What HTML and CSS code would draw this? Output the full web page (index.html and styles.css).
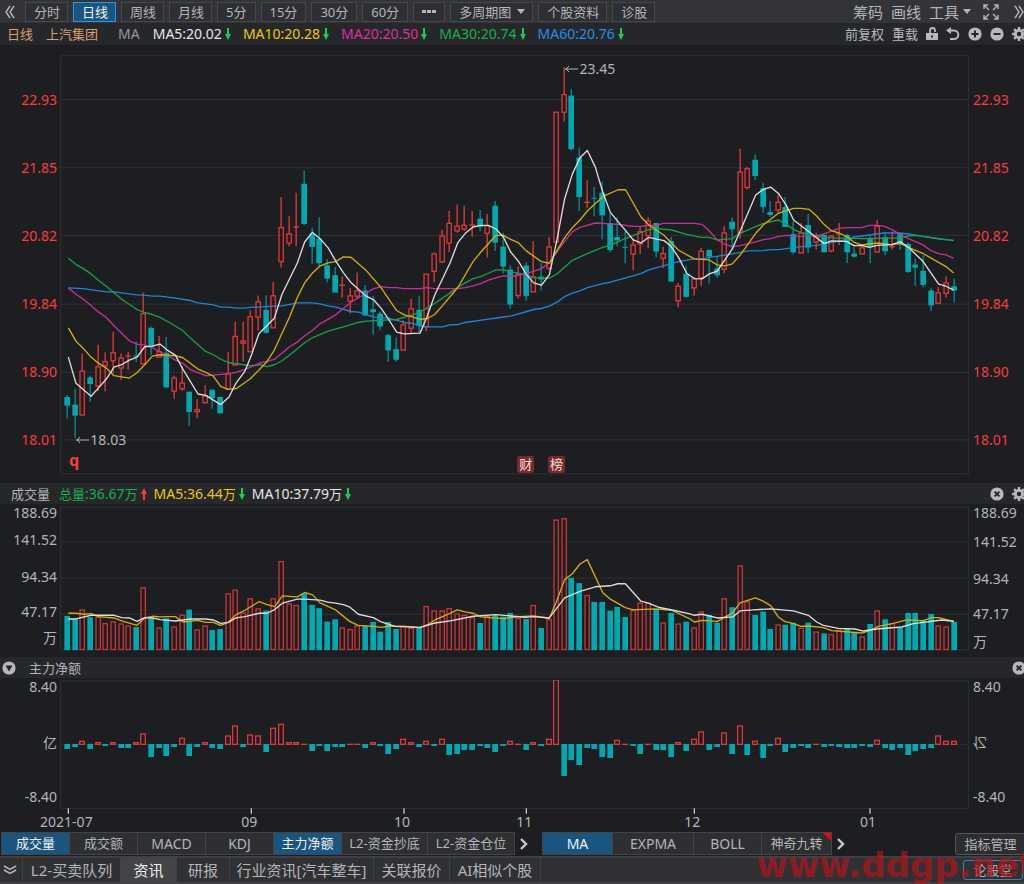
FILE: index.html
```html
<!DOCTYPE html>
<html lang="zh-CN">
<head>
<meta charset="utf-8">
<meta name="viewport" content="width=device-width, initial-scale=1">
<title>上汽集团 日线</title>
<link rel="stylesheet" href="styles.css">
</head>
<body>
<svg class="defs" aria-hidden="true">
  <symbol id="down" viewBox="0 0 6 12"><path d="M2 0h2v6h2L3 12 0 6h2z"/></symbol>
  <symbol id="up" viewBox="0 0 6 12"><path d="M2 12h2V6h2L3 0 0 6h2z"/></symbol>
  <symbol id="caret" viewBox="0 0 8 5"><path d="M0 0h8L4 5z"/></symbol>
  <symbol id="chev" viewBox="0 0 9 12"><path d="M2 1l5 5-5 5" fill="none" stroke="currentColor" stroke-width="2.4"/></symbol>
  <symbol id="close" viewBox="0 0 14 14"><circle cx="7" cy="7" r="6.6"/><path d="M4.6 4.6l4.8 4.8M9.4 4.6L4.6 9.4" stroke="#26272b" stroke-width="2"/></symbol>
  <symbol id="gear" viewBox="0 0 14 14"><circle cx="7" cy="7" r="3.6" fill="none" stroke="currentColor" stroke-width="2.8"/><path d="M7 0v3M7 11v3M0 7h3M11 7h3M2.1 2.1l2 2M9.9 9.9l2 2M11.9 2.1l-2 2M4.1 9.9l-2 2" stroke="currentColor" stroke-width="2.4"/></symbol>
</svg>
<div class="app">
  <header class="toolbar">
    <button class="icon-btn first" aria-label="收起"><svg class="dbl" viewBox="0 0 10 14"><path d="M5 1L1 7l4 6M9 1L5 7l4 6"/></svg></button>
    <nav class="periods">
      <button class="period">分时</button>
      <button class="period active">日线</button>
      <button class="period">周线</button>
      <button class="period">月线</button>
      <button class="period num">5分</button>
      <button class="period num">15分</button>
      <button class="period num">30分</button>
      <button class="period num">60分</button>
      <button class="period num" aria-label="更多"><svg class="dots" viewBox="0 0 14 3"><path d="M0 0h4v3H0zM5 0h4v3H5zM10 0h4v3h-4z"/></svg></button>
      <button class="period">多周期图<svg class="caret"><use href="#caret"/></svg></button>
      <button class="period">个股资料</button>
      <button class="period">诊股</button>
    </nav>
    <div class="tools">
      <button class="tool">筹码</button>
      <button class="tool">画线</button>
      <button class="tool">工具<svg class="caret"><use href="#caret"/></svg></button>
      <button class="tool expand" aria-label="全屏"><svg viewBox="0 0 16 16"><path d="M1 5V1h4M1 1l5 5M11 1h4v4M15 1l-5 5M1 11v4h4M1 15l5-5M15 11v4h-4M15 15l-5-5"/></svg></button>
      <button class="tool last" aria-label="展开"><svg class="dbl" viewBox="0 0 10 14"><path d="M1 1l4 6-4 6M5 1l4 6-4 6"/></svg></button>
    </div>
  </header>

  <div class="info">
    <span class="cjk tan">日线</span><span class="cjk tan name">上汽集团</span><span class="ma-title">MA</span>
    <div class="values">
      <span class="white">MA5:20.02<svg class="arrow green"><use href="#down"/></svg></span>
      <span class="yellow">MA10:20.28<svg class="arrow green"><use href="#down"/></svg></span>
      <span class="magenta">MA20:20.50<svg class="arrow green"><use href="#down"/></svg></span>
      <span class="dgreen">MA30:20.74<svg class="arrow green"><use href="#down"/></svg></span>
      <span class="blue">MA60:20.76<svg class="arrow green"><use href="#down"/></svg></span>
    </div>
    <div class="actions">
      <button class="action">前复权</button>
      <button class="action">重载</button>
      <button class="action ic lock" aria-label="锁定"><svg viewBox="0 0 12 14"><path d="M4 6V3.500a2.500 2.500 0 0 1 5 0V5" fill="none" stroke="currentColor" stroke-width="1.800"/><path fill-rule="evenodd" d="M0 6h12v7H0zM5 8.500v2h2v-2z"/></svg></button>
      <button class="action ic" aria-label="撤销"><svg viewBox="0 0 14 14"><path d="M3 3.500h5a4.300 4.300 0 0 1 0 8.600H4" fill="none" stroke="currentColor" stroke-width="2"/><path d="M0 3.500L5 0v7z"/></svg></button>
      <button class="action ic" aria-label="放大"><svg viewBox="0 0 14 14"><circle cx="7" cy="7" r="6.600"/><path d="M7 3.500v7M3.500 7h7" stroke="#26272b" stroke-width="2"/></svg></button>
      <button class="action ic" aria-label="缩小"><svg viewBox="0 0 14 14"><circle cx="7" cy="7" r="6.600"/><path d="M3.500 7h7" stroke="#26272b" stroke-width="2"/></svg></button>
      <button class="action ic" aria-label="设置"><svg><use href="#gear"/></svg></button>
    </div>
  </div>

  <section class="panel price">
    <div class="axis left"><span>22.93</span><span>21.85</span><span>20.82</span><span>19.84</span><span>18.90</span><span>18.01</span></div>
    <div class="plot">
      <svg class="chart" id="price" viewBox="180 15 2727 1263" preserveAspectRatio="none"></svg>
      <span class="note high"><svg viewBox="0 0 13 8"><path d="M0 4h13M4 1L1 4l3 3"/></svg>23.45</span>
      <span class="note low"><svg viewBox="0 0 13 8"><path d="M0 4h13M4 1L1 4l3 3"/></svg>18.03</span>
      <b class="event-q">q</b>
      <span class="event cai">财</span><span class="event bang">榜</span>
    </div>
    <div class="axis right"><span>22.93</span><span>21.85</span><span>20.82</span><span>19.84</span><span>18.90</span><span>18.01</span></div>
  </section>

  <div class="head">
    <span class="cjk">成交量</span>
    <span class="dgreen total"><i>总量</i>:36.67<i>万</i><svg class="arrow red"><use href="#up"/></svg></span>
    <span class="yellow">MA5:36.44<i>万</i><svg class="arrow green"><use href="#down"/></svg></span>
    <span class="white">MA10:37.79<i>万</i><svg class="arrow green"><use href="#down"/></svg></span>
    <div class="actions">
      <button class="action ic" aria-label="关闭"><svg><use href="#close"/></svg></button>
      <button class="action ic" aria-label="设置"><svg><use href="#gear"/></svg></button>
    </div>
  </div>
  <section class="panel volume">
    <div class="axis left"><span>188.69</span><span>141.52</span><span>94.34</span><span>47.17</span><span>万</span></div>
    <div class="plot"><svg class="chart" id="volume" viewBox="180 81 2727 435" preserveAspectRatio="none"></svg></div>
    <div class="axis right"><span>188.69</span><span>141.52</span><span>94.34</span><span>47.17</span><span>万</span></div>
  </section>

  <div class="head flow-head">
    <button class="action ic" aria-label="选择指标"><svg viewBox="0 0 14 14"><circle cx="7" cy="7" r="6.600"/><path d="M3.500 4.500h7L7 10.500z" fill="#26272b"/></svg></button>
    <span class="cjk">主力净额</span>
    <div class="actions"><button class="action ic" aria-label="关闭"><svg><use href="#close"/></svg></button></div>
  </div>
  <section class="panel flow">
    <div class="axis left"><span>8.40</span><span>亿</span><span>-8.40</span></div>
    <div class="plot"><svg class="chart" id="flow" viewBox="180 60 2727 405" preserveAspectRatio="none"></svg></div>
    <div class="axis right"><span>8.40</span><span class="flip">亿</span><span>-8.40</span></div>
  </section>
  <div class="dates" id="dates"></div>

  <nav class="indicators">
    <div class="group">
      <button class="ind on">成交量</button><button class="ind">成交额</button><button class="ind latin">MACD</button><button class="ind latin">KDJ</button><button class="ind on">主力净额</button><button class="ind wide">L2-资金抄底</button><button class="ind wide">L2-资金仓位</button>
    </div>
    <button class="more" aria-label="更多指标"><svg><use href="#chev"/></svg></button>
    <div class="group second">
      <button class="ind on latin">MA</button><button class="ind latin mid">EXPMA</button><button class="ind latin">BOLL</button><button class="ind hot">神奇九转</button>
    </div>
    <button class="more" aria-label="更多主图指标"><svg><use href="#chev"/></svg></button>
    <button class="manage">指标管理</button>
  </nav>

  <footer class="bottom">
    <button class="fold" aria-label="折叠"><svg viewBox="0 0 14 10"><path d="M1 1l6 3.500L13 1M1 5l6 3.500L13 5"/></svg></button>
    <button class="tab l2">L2-买卖队列</button><button class="tab news current">资讯</button><button class="tab report">研报</button><button class="tab trade">行业资讯[汽车整车]</button><button class="tab quote">关联报价</button><button class="tab ai">AI相似个股</button>
    <button class="forum">论股堂</button>
  </footer>
  <div class="watermark" aria-hidden="true">www.ddgp.net</div>
</div>
<script src="charts.js"></script>
</body>
</html>
```

FILE: styles.css
```css
* { box-sizing: border-box; }
body {
  margin: 0;
  background: #1d1e22;
  color: #b4b5b8;
  font: 14px/20px "Noto Sans", "Noto Sans CJK SC", sans-serif;
}
button {
  margin: 0;
  padding: 0;
  border: 0;
  background: none;
  color: inherit;
  font: inherit;
  white-space: nowrap;
}
svg { display: block; fill: currentColor; }
.defs { position: absolute; width: 0; height: 0; }
.app {
  position: relative;
  display: flex;
  flex-direction: column;
  min-height: 100vh;
  overflow: hidden;
}

/* Top toolbar */
.toolbar {
  display: flex;
  align-items: center;
  height: 23px;
  background: #333438;
  font-size: 13px;
}
.icon-btn.first { width: 25px; padding-left: 5px; }
.dbl { width: 10px; height: 14px; fill: none; stroke: #b4b5b8; stroke-width: 1.4; }
.periods { display: flex; gap: 5px; }
.period {
  display: flex;
  align-items: center;
  justify-content: center;
  height: 20px;
  padding: 0 7px 0 8px;
  border: 1px solid #46474b;
  background: #2e2f33;
  line-height: 18px;
}
.period.num { padding: 0 8px; }
.period.active { background: #1a5580; border-color: #2a98ea; color: #f0f2f4; }
.dots { width: 14px; height: 3px; }
.caret { width: 8px; height: 5px; margin-left: 6px; }
.tools { display: flex; align-items: center; margin-left: auto; gap: 8px; font-size: 15px; }
.tool { display: flex; align-items: center; line-height: 22px; }
.tool .caret { margin-left: 4px; }
.expand { margin-left: 4px; }
.expand svg { width: 16px; height: 16px; fill: none; stroke: currentColor; stroke-width: 1.4; }
.last { margin-left: 7px; }

/* Indicator summary */
.info {
  display: flex;
  align-items: center;
  height: 23px;
  padding-left: 7px;
  background: #26272b;
  border-bottom: 1px solid #1b1b20;
}
.cjk, .head i { font-size: 13px; font-style: normal; }
.tan { color: #d8a070; }
.name { margin-left: 13px; }
.ma-title { margin: 0 13px 0 20px; color: #97989c; }
.values { display: flex; gap: 12px; }
.values span, .head span { display: flex; align-items: center; white-space: nowrap; }
.white { color: #e6e6e6; }
.yellow { color: #f0c800; }
.magenta { color: #de2f9e; }
.dgreen { color: #17b04e; }
.blue { color: #1e90f0; }
.arrow { width: 6px; height: 12px; margin-left: 3px; }
.green { color: #14cf50; }
.red { color: #ff3b38; }
.actions { display: flex; align-items: center; margin-left: auto; gap: 8px; margin-right: -2px; }
.action { font-size: 13px; color: #b8b9bc; }
.ic svg { width: 14px; height: 14px; }
.lock svg { width: 12px; }

/* Chart panels */
.panel { display: flex; }
.price { flex: 438 1 0; padding: 9px 0 8px; }
.volume { flex: 152 1 0; padding: 2px 0 5px; }
.flow { flex: 137 1 0; padding-top: 2px; }
.plot { position: relative; flex: 1; min-width: 0; }
.chart { position: absolute; inset: 0; width: 100%; height: 100%; }
.axis { flex: none; }
.axis span { white-space: nowrap; }
.left { width: 60px; padding-right: 3px; text-align: right; }
.right { width: 55px; padding-left: 4px; }
.price .axis {
  display: flex;
  flex-direction: column;
  justify-content: space-between;
  padding-top: 35px;
  padding-bottom: 25px;
  color: #ff3a38;
}
.volume .axis, .flow .axis { display: grid; align-items: center; line-height: 14px; }
.volume .left { grid-template-rows: 14fr 40fr 32fr 38fr 14fr 7fr; }
.volume .right { grid-template-rows: 14fr 44fr 28fr 42fr 14fr 3fr; }
.flow .axis { grid-template-rows: 14fr 98fr 10fr 13fr; line-height: 10px; }
.flip { transform: scaleY(-1); }
.head {
  display: flex;
  align-items: center;
  height: 21px;
  padding-left: 11px;
  gap: 7px;
  background: #26272b;
}
.head .total { margin-left: 2px; }
.flow-head { padding-left: 2px; gap: 13px; }
.note { position: absolute; display: flex; align-items: center; gap: 1px; }
.note svg { width: 13px; height: 8px; fill: none; stroke: currentColor; stroke-width: 1; }
.high { left: 55.6%; top: 1%; }
.low { left: 1.8%; top: 89.2%; }
.event-q { position: absolute; left: 1%; top: 94%; color: #ff3a38; font-size: 16px; }
.event {
  position: absolute;
  top: 95.5%;
  width: 17px;
  height: 17px;
  border-radius: 3px;
  background: #7f2829;
  color: #f0e4e4;
  font-size: 13px;
  line-height: 17px;
  text-align: center;
}
.cai { left: 50.3%; }
.bang { left: 53.7%; }
.dates { position: relative; height: 16px; margin: 0 55px 0 60px; line-height: 14px; }
.dates span { position: absolute; margin-left: -2px; transform: translateX(-50%); white-space: nowrap; }

/* Chart drawing */
.grid { stroke: #303135; stroke-width: 3; fill: none; }
.r { stroke: #dc3837; stroke-width: 4; fill: #1d1e22; }
.r.vol { stroke: #c93434; }
.wr { stroke: #e23a38; stroke-width: 4; }
.c { fill: #00a8b0; }
.wc { stroke: #078b91; stroke-width: 4; }
.line { fill: none; stroke-width: 4; stroke-linejoin: round; }
.s-white { stroke: #dcdcdc; }
.s-yellow { stroke: #d4ae06; }
.s-magenta { stroke: #c92f98; }
.s-green { stroke: #18a048; }
.s-blue { stroke: #1c86dc; }
.tick { stroke: #c4c4c8; stroke-width: 4; }

/* Indicator tabs */
.indicators { display: flex; align-items: center; height: 25px; padding-left: 1px; font-size: 13px; }
.group { display: flex; border: 1px solid #434448; height: 23px; }
.ind { position: relative; width: 68px; border-right: 1px solid #434448; background: #2e2f33; line-height: 21px; }
.ind:last-child { border-right: 0; }
.ind.on { background: #1a5580; color: #f0f2f4; }
.latin { font-size: 14px; }
.wide { width: 86px; }
.second { margin-left: 14px; }
.second .on { width: 70px; }
.second .mid { width: 81px; }
.second .hot { width: 69px; }
.hot::after {
  content: "";
  position: absolute;
  top: 0;
  right: 0;
  border-top: 8px solid #ff0000;
  border-left: 8px solid transparent;
}
.more { margin-left: 4px; color: #c8c9cc; }
.more svg { width: 9px; height: 12px; }
.manage {
  width: 71px;
  height: 22px;
  margin-left: auto;
  margin-right: -2px;
  border: 1px solid #55565a;
  border-radius: 3px;
  background: #2c2d31;
}

/* Bottom tabs */
.bottom {
  display: flex;
  align-items: center;
  height: 28px;
  background: #303135;
  border-top: 2px solid #404145;
  border-bottom: 2px solid #404145;
  font-size: 15px;
}
.fold { width: 22px; padding-left: 3px; }
.fold svg { width: 14px; height: 10px; fill: none; stroke: currentColor; stroke-width: 1.5; }
.tab { height: 24px; border-left: 1px solid #404145; line-height: 24px; }
.l2 { width: 98px; }
.news { width: 56px; }
.report { width: 53px; }
.trade { width: 144px; }
.quote { width: 76px; }
.ai { width: 92px; border-right: 1px solid #404145; }
.current { background: #434448; color: #f0f0f0; }
.forum {
  width: 60px;
  height: 20px;
  margin-left: auto;
  margin-right: 1px;
  border: 1px solid #2888d0;
  border-radius: 3px;
  font-size: 13px;
  line-height: 18px;
}
.watermark {
  position: absolute;
  right: -11px;
  bottom: 2px;
  color: rgba(190, 18, 24, 0.66);
  font: bold 34px/34px "DejaVu Sans", sans-serif;
  white-space: nowrap;
  pointer-events: none;
}
```

FILE: charts.js
```js
// Chart space uses three units per CSS pixel at the default window width.
const FIRST = 201, STEP = 22.93;
const barX = i => Math.round((FIRST + i * STEP) / 3) * 3;

// direction, high, body top, body bottom, low
const candles = `c 1037 1043 1068 1107|c 1018 1066 1098 1166|r 912 965 1097 1097|c 978 984 1003 1058|r 886 952 1010 1026|r 909 937 949 1026|r 847 910 934 970|r 912 926 956 993|r 907 919 919 962|c 877 919 919 938|r 729 793 943 945|c 831 835 892 917|r 860 907 923 925|c 863 910 1013 1017|r 979 986 1025 1048|r 950 1001 1018 1025|c 1027 1027 1087 1130|r 1050 1081 1087 1107|r 1008 1040 1060 1063|c 1020 1021 1046 1078|c 1043 1043 1091 1092|r 907 973 1020 1020|r 817 861 947 947|r 817 875 881 937|r 782 802 907 907|r 738 757 803 843|c 738 781 849 852|r 697 739 835 835|r 442 534 636 654|r 500 553 580 590|r 429 531 534 590|c 363 402 522 526|c 534 552 591 643|c 503 567 640 651|c 628 647 686 698|c 652 677 728 728|r 680 706 706 745|r 716 739 755 792|r 669 724 740 747|c 706 723 797 800|c 739 779 787 857|c 787 792 830 842|c 853 857 902 938|c 864 899 930 938|r 812 826 902 902|r 748 778 836 851|c 739 781 828 851|r 674 674 832 845|r 608 613 665 698|r 540 559 637 640|r 483 521 580 607|r 464 530 544 549|r 468 527 538 544|r 484 525 528 561|c 481 507 531 545|r 493 529 551 624|c 454 468 578 604|c 549 591 650 672|c 648 660 764 777|r 651 673 738 747|c 638 648 738 754|r 575 682 727 727|c 641 681 689 722|r 562 592 656 661|r 187 187 577 577|r 52 134 187 215|c 117 137 297 302|c 293 324 441 483|r 391 457 459 476|c 411 445 445 500|c 396 429 496 569|c 491 520 600 608|c 503 562 571 590|c 543 592 594 641|r 568 586 613 662|r 529 546 583 613|r 503 514 558 594|c 520 520 605 623|r 591 612 626 656|c 561 574 695 695|r 700 710 754 774|c 648 673 741 745|r 683 688 715 738|r 595 605 685 709|c 600 601 620 702|c 620 657 676 685|r 530 550 659 671|c 503 516 538 600|r 297 367 550 567|r 352 357 413 420|c 313 330 378 391|c 399 415 470 489|c 454 487 495 501|r 434 458 481 489|c 442 472 531 532|c 515 553 607 614|r 520 550 610 610|c 493 526 593 610|r 549 559 577 600|c 556 556 607 608|r 556 559 604 608|r 520 552 556 587|c 552 556 607 640|c 585 612 620 624|r 585 595 613 614|c 559 567 591 640|r 510 530 607 608|c 546 562 604 617|r 546 590 593 600|c 550 550 585 601|c 578 583 666 670|c 627 645 653 709|c 617 664 705 713|c 716 723 767 785|r 713 730 761 764|r 680 700 731 745|c 687 710 722 759`
  .split("|").map(s => { const [d, ...v] = s.split(" "); return [d, ...v.map(Number)]; });

const volumes = [409,419,391,413,413,432,427,433,439,442,325,414,445,416,442,407,390,451,439,451,448,343,332,400,358,388,393,358,247,373,378,342,376,386,426,419,445,450,439,439,427,456,427,448,440,446,444,381,394,394,387,403,407,414,430,411,407,411,400,417,418,378,445,420,123,119,295,311,348,367,367,393,382,412,393,371,371,388,430,400,433,426,445,397,406,429,358,383,260,367,406,396,448,436,435,430,446,429,457,461,465,452,448,457,472,433,394,419,432,445,400,400,424,403,439,442,427];

const flows = [-15,-9,10,-15,6,-6,6,-12,-12,6,32,-39,-12,-36,-9,19,-36,-9,6,-12,-15,26,56,-9,29,26,-25,49,61,6,6,3,-22,-6,-22,-9,-9,3,3,-12,6,-6,-29,-15,16,6,-9,10,-6,16,-32,-29,-18,-18,-6,-12,-25,-6,10,3,-18,6,-6,16,194,-95,-48,-62,-12,-15,-39,-42,13,3,-6,-29,3,-18,-18,-39,6,-22,16,38,-18,-9,35,-29,56,-32,10,-42,-6,19,-25,-12,-6,-12,3,-9,-6,-9,-12,-12,-6,-9,13,-12,-18,-12,-32,-22,-15,-12,26,10,10];

const priceLines = {
  blue: "205,715 250,717 319,727 342,727 411,736 434,737 457,740 480,740 526,746 571,753 594,760 640,766 662,773 687,773 708,776 735,776 755,773 777,773 823,770 846,769 892,760 937,760 960,763 984,769 1007,773 1053,786 1075,788 1120,802 1166,806 1213,819 1237,822 1260,830 1282,832 1327,832 1350,826 1374,825 1396,819 1465,809 1500,804 1535,799 1601,780 1624,777 1648,770 1671,758 1694,741 1717,731 1740,724 1762,714 1808,702 1831,698 1923,672 1946,661 1992,648 2036,636 2083,628 2106,627 2197,613 2244,604 2290,603 2312,600 2336,600 2404,591 2450,587 2539,570 2562,562 2608,556 2650,550 2701,550 2725,553 2768,560 2816,568 2861,572",
  green: "205,626 228,645 250,657 273,673 296,693 319,710 365,749 411,780 434,789 457,795 480,804 503,816 549,844 571,866 617,906 640,916 662,929 687,940 708,943 755,949 780,946 800,952 823,946 846,934 869,917 914,880 937,865 984,845 1030,832 1075,819 1097,815 1190,810 1237,796 1260,788 1304,762 1350,730 1374,713 1396,700 1419,687 1442,681 1465,671 1488,661 1510,661 1532,666 1578,676 1601,684 1648,686 1671,673 1717,632 1762,612 1808,593 1831,587 1877,566 1923,549 1946,540 1970,537 2015,541 2060,554 2103,563 2128,563 2151,571 2197,567 2220,551 2267,531 2290,521 2336,511 2359,524 2381,540 2404,549 2450,559 2472,564 2539,566 2585,567 2690,565 2725,559 2750,557 2791,563 2861,573",
  magenta: "205,715 228,734 250,749 273,768 296,788 319,804 342,829 388,874 411,884 434,887 457,895 480,907 503,919 526,932 549,942 571,960 594,970 617,979 640,977 662,975 687,973 708,969 735,960 750,954 777,942 823,930 869,892 892,878 914,859 937,843 960,823 1007,796 1053,758 1097,732 1120,718 1143,711 1166,714 1190,714 1213,717 1260,717 1280,714 1304,717 1374,717 1396,714 1419,709 1442,702 1465,692 1488,685 1510,679 1540,680 1578,673 1624,657 1648,640 1671,606 1694,575 1717,546 1740,533 1786,520 1854,524 1900,530 1923,530 1946,527 1967,528 1990,521 2083,521 2106,524 2128,544 2151,570 2174,584 2197,591 2220,588 2267,577 2290,570 2312,567 2336,560 2359,557 2404,560 2450,559 2472,553 2517,536 2539,534 2585,534 2608,527 2631,527 2654,530 2676,540 2701,555 2725,567 2768,585 2791,602 2816,612 2838,616 2861,626",
  yellow: "205,835 228,875 250,897 273,923 296,942 319,956 342,979 388,986 411,970 434,946 457,920 480,916 526,919 549,925 594,959 617,969 640,980 662,1011 685,1020 708,1018 750,989 777,962 800,938 823,902 869,802 892,744 914,700 937,671 960,649 984,640 1007,636 1030,622 1053,623 1097,661 1143,714 1190,783 1213,796 1237,802 1260,810 1282,807 1304,795 1327,769 1374,713 1419,636 1442,608 1488,557 1510,557 1532,569 1556,580 1578,603 1624,636 1648,641 1671,603 1694,564 1717,534 1740,511 1762,484 1808,441 1854,420 1877,420 1923,502 1946,525 1992,557 2036,602 2083,628 2128,631 2151,646 2174,649 2197,643 2220,617 2267,551 2290,526 2336,490 2381,476 2404,476 2427,479 2450,499 2472,524 2494,543 2517,550 2539,560 2562,578 2585,586 2631,580 2676,585 2701,581 2725,593 2768,611 2838,651 2861,670",
  white: "205,923 228,1002 273,1041 319,989 342,953 365,946 388,932 411,923 434,892 457,890 480,884 503,903 526,917 549,960 594,1034 617,1038 662,1066 687,1043 708,1001 735,965 755,915 777,852 823,806 846,734 892,640 914,577 937,548 960,567 984,594 1007,634 1030,669 1053,699 1097,739 1120,750 1143,776 1166,810 1190,848 1213,853 1260,851 1280,805 1304,737 1350,640 1374,578 1396,551 1419,532 1442,527 1465,527 1488,538 1510,562 1532,607 1556,636 1578,673 1601,700 1624,707 1648,676 1671,570 1694,447 1717,373 1740,324 1762,302 1786,352 1808,426 1831,488 1854,516 1877,543 1900,571 1923,580 1946,563 1992,573 2013,590 2036,624 2060,671 2083,687 2106,688 2128,673 2151,665 2197,598 2244,490 2267,436 2290,419 2312,412 2336,432 2359,467 2381,511 2427,546 2472,582 2494,574 2539,575 2562,588 2585,587 2608,593 2631,587 2676,585 2701,576 2725,593 2768,634 2791,668 2816,704 2838,710 2861,722"
};
const volumeLines = {
  yellow: "205,401 228,401 250,404 273,402 296,411 342,415 365,424 411,437 434,415 457,410 480,412 503,411 526,411 549,427 594,422 617,428 640,428 662,437 685,428 708,405 735,392 778,366 801,375 824,381 847,349 892,352 914,339 938,346 960,370 1007,391 1050,426 1075,437 1121,440 1144,443 1167,439 1215,440 1260,444 1282,436 1305,421 1350,401 1372,391 1395,397 1420,401 1442,412 1510,417 1555,411 1602,409 1648,416 1671,362 1694,300 1717,283 1740,254 1762,241 1808,339 1831,359 1876,384 1900,391 1965,388 2015,392 2070,418 2083,427 2106,422 2152,425 2198,400 2220,370 2266,355 2288,364 2312,378 2335,412 2355,426 2380,431 2402,440 2425,439 2470,444 2495,453 2585,460 2610,453 2635,440 2680,431 2720,421 2770,423 2795,414 2816,414 2862,425",
  white: "205,418 228,418 273,407 342,407 365,414 388,415 411,425 434,414 457,415 480,420 526,424 571,418 617,418 640,421 662,431 685,428 708,415 735,411 778,401 801,401 824,390 847,371 892,359 914,359 960,362 983,368 1007,371 1030,375 1050,383 1075,404 1120,414 1144,427 1185,440 1260,443 1305,430 1355,423 1420,410 1487,405 1575,413 1602,411 1648,415 1694,355 1740,336 1786,322 1831,319 1853,313 1876,313 1923,365 1945,371 1975,383 2020,392 2070,403 2083,407 2106,404 2152,415 2198,412 2220,394 2260,391 2312,388 2380,394 2425,407 2450,427 2470,437 2515,446 2565,448 2590,454 2630,448 2705,442 2740,432 2825,421 2862,425"
};

const rect = (cls, x, y, w, h) => `<rect class="${cls}" x="${x}" y="${y}" width="${w}" height="${h}"/>`;
const seg = (cls, x1, y1, x2, y2) => `<path class="${cls}" d="M${x1} ${y1}L${x2} ${y2}"/>`;
const lines = set => Object.entries(set).map(([k, p]) => `<polyline class="line s-${k}" points="${p}"/>`).join("");
const frame = (top, bottom, rows) =>
  rect("grid", 182, top, 2723, bottom - top) + rows.map(y => seg("grid", 182, y, 2905, y)).join("");
const snap = v => Math.round(v / 3) * 3;

let out = frame(17, 1274, [149, 354, 557, 764, 969, 1172]);
candles.forEach(([d, hi, top, bot, lo], i) => {
  const x = barX(i);
  out += seg("w" + d, x + 0.5, hi, x + 0.5, lo);
  if (bot - top < 5) out += seg("w" + d, x - 8, top + 1, x + 9, top + 1);
  else if (d === "r") out += rect("r", x - 6, top, 13, bot - top);
  else out += rect("c", x - 8, top, 17, bot - top + 1);
});
document.getElementById("price").innerHTML = out + lines(priceLines);

out = frame(84, 510, [188, 296, 404]);
volumes.forEach((top, i) => {
  const x = barX(i);
  out += candles[i][0] === "r" ? rect("r vol", x - 6, top, 13, 509 - top) : rect("c", x - 8, top, 17, 511 - top);
});
document.getElementById("volume").innerHTML = out + lines(volumeLines);

out = frame(63, 445, [253]);
flows.forEach((v, i) => {
  const x = barX(i);
  if (v < 0) out += rect("c", x - 8, 252, 17, snap(-v));
  else if (v < 5) out += seg("wr", x - 8, 253, x + 9, 253);
  else out += rect("r", x - 7, 254 - v, 14, v - 1);
});
const months = [["2021-07", 205], ["09", 754], ["10", 1212], ["11", 1579], ["12", 2083], ["01", 2610]];
out += months.map(([, x]) => seg("tick", x, 445, x, 461)).join("");
document.getElementById("flow").innerHTML = out;
document.getElementById("dates").innerHTML =
  months.map(([t, x]) => `<span style="left:${((x - 180) / 27.27).toFixed(2)}%">${t}</span>`).join("");
```
